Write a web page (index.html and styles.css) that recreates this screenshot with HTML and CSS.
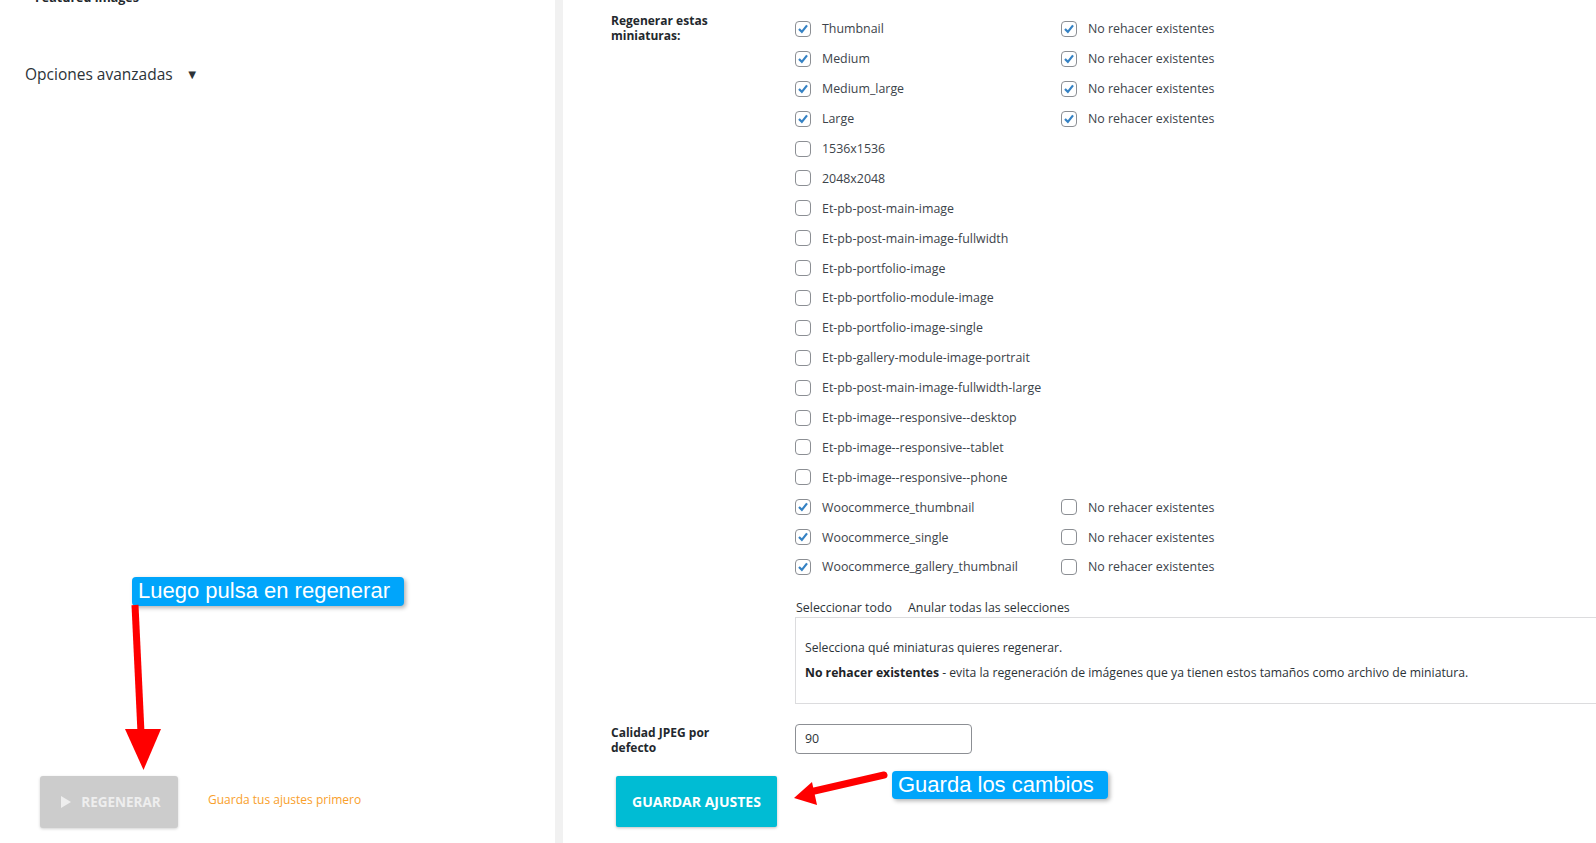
FILE: index.html
```html
<!DOCTYPE html>
<html lang="es">
<head>
    <meta charset="UTF-8">
    <meta name="viewport" content="width=device-width, initial-scale=1.0">
    <title>Regenerar miniaturas</title>
    <link rel="stylesheet" href="styles.css">
</head>
<body>
    <svg width="0" height="0" class="defs">
        <symbol id="chk" viewBox="0 0 16 16">
            <path d="M3.4 8 L6.7 11.3 L12.6 3.8" fill="none" stroke="#3582c4" stroke-width="2.5"/>
        </symbol>
    </svg>
    <div class="page">
        <aside class="side">
            <p class="side-title">Featured images</p>
            <h2 class="advanced">Opciones avanzadas <span class="caret">&#9660;</span></h2>
            <div class="regen">
                <button class="btn-regen" type="button"><span class="play"></span>REGENERAR</button>
                <span class="regen-note">Guarda tus ajustes primero</span>
            </div>
        </aside>
        <div class="gutter"></div>
        <main class="settings">
            <div class="field">
                <div class="field-label">Regenerar estas<br>miniaturas:</div>
                <div class="field-body">
                    <ul class="sizes">
                        <li><label class="check"><span class="box"><svg><use href="#chk"/></svg></span>Thumbnail</label><label class="check"><span class="box"><svg><use href="#chk"/></svg></span>No rehacer existentes</label></li>
                        <li><label class="check"><span class="box"><svg><use href="#chk"/></svg></span>Medium</label><label class="check"><span class="box"><svg><use href="#chk"/></svg></span>No rehacer existentes</label></li>
                        <li><label class="check"><span class="box"><svg><use href="#chk"/></svg></span>Medium_large</label><label class="check"><span class="box"><svg><use href="#chk"/></svg></span>No rehacer existentes</label></li>
                        <li><label class="check"><span class="box"><svg><use href="#chk"/></svg></span>Large</label><label class="check"><span class="box"><svg><use href="#chk"/></svg></span>No rehacer existentes</label></li>
                        <li><label class="check"><span class="box"></span>1536x1536</label></li>
                        <li><label class="check"><span class="box"></span>2048x2048</label></li>
                        <li><label class="check"><span class="box"></span>Et-pb-post-main-image</label></li>
                        <li><label class="check"><span class="box"></span>Et-pb-post-main-image-fullwidth</label></li>
                        <li><label class="check"><span class="box"></span>Et-pb-portfolio-image</label></li>
                        <li><label class="check"><span class="box"></span>Et-pb-portfolio-module-image</label></li>
                        <li><label class="check"><span class="box"></span>Et-pb-portfolio-image-single</label></li>
                        <li><label class="check"><span class="box"></span>Et-pb-gallery-module-image-portrait</label></li>
                        <li><label class="check"><span class="box"></span>Et-pb-post-main-image-fullwidth-large</label></li>
                        <li><label class="check"><span class="box"></span>Et-pb-image--responsive--desktop</label></li>
                        <li><label class="check"><span class="box"></span>Et-pb-image--responsive--tablet</label></li>
                        <li><label class="check"><span class="box"></span>Et-pb-image--responsive--phone</label></li>
                        <li><label class="check"><span class="box"><svg><use href="#chk"/></svg></span>Woocommerce_thumbnail</label><label class="check"><span class="box"></span>No rehacer existentes</label></li>
                        <li><label class="check"><span class="box"><svg><use href="#chk"/></svg></span>Woocommerce_single</label><label class="check"><span class="box"></span>No rehacer existentes</label></li>
                        <li><label class="check"><span class="box"><svg><use href="#chk"/></svg></span>Woocommerce_gallery_thumbnail</label><label class="check"><span class="box"></span>No rehacer existentes</label></li>
                    </ul>
                    <div class="select-links">
                        <a>Seleccionar todo</a>
                        <a>Anular todas las selecciones</a>
                    </div>
                    <div class="help">
                        <p>Selecciona qué miniaturas quieres regenerar.</p>
                        <p><strong>No rehacer existentes</strong> - evita la regeneración de imágenes que ya tienen estos tamaños como archivo de miniatura.</p>
                    </div>
                </div>
            </div>
            <div class="field quality">
                <div class="field-label">Calidad JPEG por<br>defecto</div>
                <div class="field-body">
                    <input class="num" type="text" value="90">
                </div>
            </div>
            <button class="btn-save" type="button">GUARDAR AJUSTES</button>
        </main>

        <div class="callout callout-regen">Luego pulsa en regenerar</div>
        <div class="callout callout-save">Guarda los cambios</div>
        <svg class="marks" viewBox="0 0 1596 843">
            <line x1="135" y1="605" x2="141" y2="733" stroke="#ff0000" stroke-width="7"/>
            <polygon points="125,729 161,729 143.5,770" fill="#ff0000"/>
            <line x1="884" y1="775" x2="810" y2="792" stroke="#ff0000" stroke-width="7" stroke-linecap="round"/>
            <polygon points="794,798 812,782 817,805" fill="#ff0000"/>
        </svg>
    </div>
</body>
</html>
```

FILE: styles.css
```css
* {
    box-sizing: border-box;
}
body {
    margin: 0;
    background: #fff;
    font-family: "Open Sans", "Noto Sans", sans-serif;
    font-size: 12.4px;
    color: #3c434a;
    overflow: hidden;
}
.defs {
    position: absolute;
}
.page {
    position: relative;
    display: flex;
    height: 843px;
    overflow: hidden;
}

/* left column */
.side {
    width: 555px;
    flex-shrink: 0;
    display: flex;
    flex-direction: column;
}
.side-title {
    margin: -10px 0 0 35px;
    font-size: 12.5px;
    font-weight: bold;
    line-height: 16px;
    color: #23282d;
}
.advanced {
    margin: 58px 0 0 25px;
    font-size: 15.5px;
    font-weight: normal;
    line-height: 20px;
    color: #2c3338;
}
.caret {
    font-size: 13px;
    margin-left: 9px;
    vertical-align: 1px;
    color: #2c3338;
}
.regen {
    margin: auto 0 15px 40px;
    display: flex;
    align-items: center;
    gap: 30px;
}
.btn-regen {
    width: 138px;
    height: 52px;
    border: none;
    border-radius: 3px;
    background: #cccccc;
    box-shadow: 0 1px 3px rgba(0, 0, 0, 0.18);
    color: #eeeeee;
    font-family: "Open Sans", sans-serif;
    font-size: 13.5px;
    font-weight: bold;
    display: flex;
    align-items: center;
    justify-content: center;
    gap: 10px;
    padding: 0 0 0 4px;
}
.play {
    width: 0;
    height: 0;
    border-top: 6.5px solid transparent;
    border-bottom: 6.5px solid transparent;
    border-left: 10px solid #eeeeee;
}
.regen-note {
    color: #f9a02b;
    font-size: 12px;
    margin-top: -6px;
}

.gutter {
    width: 8px;
    flex-shrink: 0;
    background: #f1f1f1;
}

/* right column */
.settings {
    flex: 1;
    padding: 13px 0 0 48px;
    min-width: 0;
}
.field {
    display: flex;
}
.field-label {
    width: 184px;
    flex-shrink: 0;
    font-weight: bold;
    font-size: 12px;
    line-height: 15px;
    color: #23282d;
}
.field-body {
    flex: 1;
}
.sizes {
    list-style: none;
    margin: 1px 0 0;
    padding: 0;
}
.sizes li {
    display: flex;
    align-items: center;
    height: 29.9px;
}
.check {
    display: flex;
    align-items: center;
    gap: 11px;
    width: 266px;
    white-space: nowrap;
}
.box {
    width: 16px;
    height: 16px;
    border: 1px solid #8c8f94;
    border-radius: 4px;
    background: #fff;
    display: flex;
}
.box svg {
    width: 14px;
    height: 14px;
}
.select-links {
    margin-top: 18px;
    display: flex;
    gap: 16px;
    padding-left: 1px;
    line-height: 16px;
}
.select-links a {
    color: #2c3338;
}
.help {
    margin-top: 1px;
    width: 820px;
    height: 87px;
    border: 1px solid #dcdcde;
    border-right: none;
    padding: 22px 9px 0;
    font-size: 12.2px;
}
.help p {
    margin: 0 0 9px;
    line-height: 16px;
    color: #2c3338;
}
.help strong {
    color: #1d2327;
}
.quality {
    margin-top: 18px;
    align-items: flex-start;
}
.quality .field-label {
    padding-top: 3px;
}
.num {
    margin-top: 2px;
    width: 177px;
    height: 30px;
    border: 1px solid #8c8f94;
    border-radius: 4px;
    padding: 0 9px;
    font-family: "Open Sans", sans-serif;
    font-size: 12.4px;
    color: #2c3338;
}
.btn-save {
    margin: 21px 0 0 5px;
    width: 161px;
    height: 51px;
    border: none;
    border-radius: 2px;
    background: #00bcd4;
    box-shadow: 0 1px 3px rgba(0, 0, 0, 0.25);
    color: #fff;
    font-family: "Open Sans", sans-serif;
    font-size: 14px;
    font-weight: bold;
}

/* annotations */
.callout {
    position: absolute;
    height: 29px;
    padding: 0 6px;
    background: #00a5fb;
    color: #fff;
    font-family: "Liberation Sans", Arial, sans-serif;
    font-size: 22px;
    line-height: 28px;
    border-radius: 4px;
    box-shadow: 2px 2px 4px rgba(0, 0, 0, 0.3);
    white-space: nowrap;
}
.callout-regen {
    left: 132px;
    top: 577px;
    width: 272px;
}
.callout-save {
    left: 892px;
    top: 771px;
    width: 216px;
    height: 28px;
}
.marks {
    position: absolute;
    left: 0;
    top: 0;
    width: 1596px;
    height: 843px;
    pointer-events: none;
}
```
